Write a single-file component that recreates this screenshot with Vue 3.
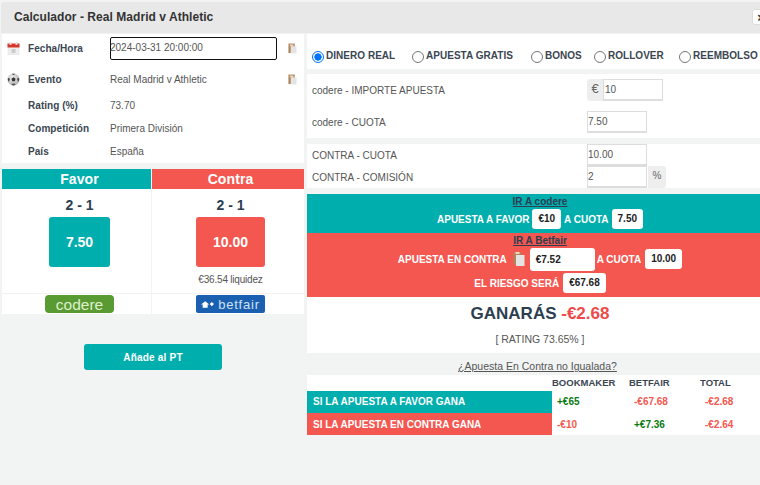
<script setup>
const radios = [
  { label: 'DINERO REAL', on: true },
  { label: 'APUESTA GRATIS' },
  { label: 'BONOS' },
  { label: 'ROLLOVER' },
  { label: 'REEMBOLSO' },
]
</script>

<template>
  <div class="page">
    <header class="head">
      <h1>Calculador - Real Madrid v Athletic</h1>
      <button class="close">×</button>
    </header>
    <div class="cols">
      <section class="left">
        <div class="card info">
          <div class="row r1">
            <svg class="ico" viewBox="0 0 13 13"><rect x="1" y="2" width="11" height="11" fill="#eee" stroke="#ddd" stroke-width=".5"/><rect x="0.5" y="1.5" width="12" height="4" fill="#d9362b"/><rect x="2.5" y="0" width="2" height="3" fill="#f4dcd9"/><rect x="8.5" y="0" width="2" height="3" fill="#f4dcd9"/><rect x="4.5" y="7" width="4" height="4" fill="#ccc"/></svg>
            <b>Fecha/Hora</b>
            <span class="dt">2024-03-31 20:00:00</span>
            <svg class="clip" viewBox="0 0 10 12"><rect x="0.5" y="0.5" width="7" height="10.5" fill="#b0835a"/><rect x="2" y="1.5" width="4" height="2" fill="#e8d8c0"/><rect x="3" y="3.5" width="6.5" height="8" fill="#e4e4e4"/></svg>
          </div>
          <div class="row r2">
            <svg class="ico ball" viewBox="0 0 14 14"><defs><radialGradient id="ball" cx=".4" cy=".35" r=".75"><stop offset="0" stop-color="#f0f0f0"/><stop offset="1" stop-color="#aaa"/></radialGradient></defs><circle cx="7" cy="7" r="6.5" fill="url(#ball)"/><path d="M7 4.6 9.2 6.2 8.4 8.8H5.6L4.8 6.2z" fill="#333"/><path d="M.8 6 2.6 5 3 7.6 1.4 9.4z" fill="#444"/><path d="M13.2 6 11.4 5 11 7.6 12.6 9.4z" fill="#444"/><path d="M5 .8 9 .8 7 2.4z" fill="#555"/><path d="M4.6 12.9 6 11.2H8L9.4 12.9 7 13.5z" fill="#555"/></svg>
            <b>Evento</b>
            <span>Real Madrid v Athletic</span>
            <svg class="clip" viewBox="0 0 10 12"><rect x="0.5" y="0.5" width="7" height="10.5" fill="#b0835a"/><rect x="2" y="1.5" width="4" height="2" fill="#e8d8c0"/><rect x="3" y="3.5" width="6.5" height="8" fill="#e4e4e4"/></svg>
          </div>
          <div class="row r3"><i class="ico"></i><b>Rating (%)</b><span>73.70</span></div>
          <div class="row r3"><i class="ico"></i><b>Competición</b><span>Primera División</span></div>
          <div class="row r3"><i class="ico"></i><b>País</b><span>España</span></div>
        </div>

        <div class="odds">
          <div class="col">
            <div class="top teal">Favor</div>
            <div class="body">
              <div class="score">2 - 1</div>
              <div class="price teal p1">7.50</div>
            </div>
            <div class="logo"><span class="codere">codere</span></div>
          </div>
          <div class="col">
            <div class="top red">Contra</div>
            <div class="body">
              <div class="score">2 - 1</div>
              <div class="price red p2">10.00</div>
              <div class="liq">€36.54 liquidez</div>
            </div>
            <div class="logo">
              <span class="betfair">
                <svg viewBox="0 0 18 10" width="15" height="9"><path d="M0 5 5 1l5 4H8v4H2V5z" fill="#fff"/><path d="M13 2l2.5 2.5L13 7l-2.5-2.5z" fill="#fff"/></svg>betfair
              </span>
            </div>
          </div>
        </div>
        <div class="addwrap"><button class="add">Añade al PT</button></div>
      </section>

      <section class="right">
        <div class="card radios">
          <label v-for="r in radios" :key="r.label" class="radio">
            <span class="dot" :class="{ on: r.on }"></span>{{ r.label }}
          </label>
        </div>
        <div class="card amounts">
          <div class="frow h32">
            <span class="lab">codere - IMPORTE APUESTA</span>
            <span class="addon eur">€</span><span class="field w60">10</span>
          </div>
          <div class="frow h32">
            <span class="lab">codere - CUOTA</span>
            <span class="field">7.50</span>
          </div>
        </div>
        <div class="card contra">
          <div class="frow h22">
            <span class="lab">CONTRA - CUOTA</span>
            <span class="field">10.00</span>
          </div>
          <div class="frow h22">
            <span class="lab">CONTRA - COMISIÓN</span>
            <span class="field">2</span><span class="addon pct">%</span>
          </div>
        </div>

        <div class="band teal b1">
          <a class="go">IR A codere</a>
          <div class="line g3">APUESTA A FAVOR<span class="chip">€10</span>A CUOTA<span class="chip">7.50</span></div>
        </div>
        <div class="band red b2">
          <a class="go">IR A Betfair</a>
          <div class="line">
            <span>APUESTA EN CONTRA</span>
            <svg class="clip2" viewBox="0 0 12 14"><rect x="0.5" y="0.5" width="8" height="12" fill="#b0835a"/><rect x="2.5" y="0" width="4" height="2" fill="#e8d8c0"/><rect x="3" y="3" width="8.5" height="11" fill="#e4e4e4"/></svg>
            <span class="chip inputchip">€7.52</span>
            <span class="cuota">A CUOTA</span>
            <span class="chip">10.00</span>
          </div>
          <div class="line l3">EL RIESGO SERÁ<span class="chip">€67.68</span></div>
        </div>
        <div class="result">
          <div class="win">GANARÁS <span>-€2.68</span></div>
          <div class="rate">[ RATING 73.65% ]</div>
        </div>

        <a class="unmatched">¿Apuesta En Contra no Igualada?</a>
        <div class="table">
          <div class="thead"><span class="c0"></span><span class="c1">BOOKMAKER</span><span class="c2">BETFAIR</span><span class="c3">TOTAL</span></div>
          <div class="trow">
            <span class="c0 teal">SI LA APUESTA A FAVOR GANA</span>
            <span class="c1 pos">+€65</span><span class="c2 neg">-€67.68</span><span class="c3 neg">-€2.68</span>
          </div>
          <div class="trow second">
            <span class="c0 red">SI LA APUESTA EN CONTRA GANA</span>
            <span class="c1 neg">-€10</span><span class="c2 pos">+€7.36</span><span class="c3 neg">-€2.64</span>
          </div>
        </div>
      </section>
    </div>
  </div>
</template>

<style>
html, body { margin: 0; background: #f2f4f4; overflow: hidden; }
</style>

<style scoped>
.page {
  width: 760px; height: 485px; overflow: hidden; background: #f2f4f4; padding-top: 2px;
  box-sizing: border-box; font-family: "Liberation Sans", Arial, sans-serif; color: #2c3e50;
}
.head {
  height: 31px; margin-left: 1px; background: #e8e8e8; display: flex; align-items: center;
  justify-content: space-between; padding-left: 13px; border-radius: 3px 0 0 0; padding-bottom: 2px; box-sizing: border-box;
}
h1 { margin: 0; font-size: 12px; font-weight: 700; color: #333; letter-spacing: .05px; }
.close {
  width: 18px; height: 16px; margin-right: -10px; padding: 0; border: 1px solid #ddd; background: #fff; flex: none;
  font: 700 13px "Liberation Sans", sans-serif; color: #333; border-radius: 3px;
}
.cols { display: flex; padding-top: 1px; }
.left { width: 302px; margin-left: 2px; flex: none; }
.right { width: 466px; margin-left: 3px; flex: none; }
.card { background: #fff; }
.teal { background: #00aeae; color: #fff; }
.red { background: #f4574f; color: #fff; }

.info { height: 129px; font-size: 10px; color: #555; }
.row { display: flex; align-items: center; padding-left: 5px; box-sizing: border-box; }
.row b { width: 82px; margin-left: 8px; color: #3a4652; letter-spacing: .05px; }
.row > span { width: 167px; }
.ico { display: block; width: 13px; height: 13px; flex: none; }
.ball { margin-top: 1px; }
.r1 { height: 29px; }
.r2 { height: 31px; padding-top: 1px; }
.r3 { height: 23px; }
.dt {
  box-sizing: border-box; height: 23px; line-height: 20px; border: 1.5px solid #111; border-radius: 2px;
  font-size: 10px; color: #555; text-indent: -1px;
}
.clip { width: 9px; height: 11px; margin-left: 11px; flex: none; }

.odds { display: flex; margin-top: 6px; gap: 1px; }
.col { flex: 1 1 0; background: #fff; display: flex; flex-direction: column; }
.col:first-child { flex: 0 0 149px; }
.top { height: 20px; line-height: 20px; text-align: center; font-size: 14px; font-weight: 700; margin-bottom: 1px; padding-left: 6px; letter-spacing: .1px; }
.body { height: 103px; display: flex; flex-direction: column; align-items: center; padding-left: 6px; }
.logo { height: 20px; border-top: 1px solid #f2f2f2; display: flex; justify-content: center; padding-left: 6px; }
.col + .col .top, .col + .col .body, .col + .col .logo { padding-left: 5px; }
.score { font-size: 14px; font-weight: 700; margin-top: 6px; height: 19px; line-height: 19px; }
.price {
  margin-top: 2px; height: 50px; line-height: 50px; text-align: center; font-size: 14px; font-weight: 700;
  border-radius: 3px; padding: 0;
}
.p1 { width: 61px; }
.p2 { width: 69px; }
.liq { font-size: 10px; letter-spacing: -.2px; color: #555; margin-top: 7px; }
.codere {
  width: 69px; height: 18px; margin-top: 1px; background: #5a9a32; color: #dff0cf; border-radius: 4px;
  font-size: 15.5px; line-height: 20px; text-align: center; overflow: hidden;
}
.betfair {
  width: 69px; height: 18px; margin-top: 1px; background: #1a5fb0; color: #cfe0f3; border-radius: 2px;
  font-size: 13px; display: flex; align-items: center; justify-content: center; gap: 2px;
  letter-spacing: .8px;
}
.addwrap { display: flex; justify-content: center; margin-top: 30px; }
.add {
  width: 138px; height: 26px; border: 0; border-radius: 3px; background: #00aeae; color: #fff;
  font: 700 10px "Liberation Sans", sans-serif; letter-spacing: .2px;
}

.radios {
  height: 35px; box-sizing: border-box; padding: 7px 0 0 5px; display: flex; align-items: center;
  font-size: 10px; font-weight: 700; color: #3a4652; letter-spacing: .03px;
}
.radio { display: flex; align-items: center; white-space: nowrap; }
.radio:nth-child(1) { width: 100px; }
.radio:nth-child(2) { width: 119px; }
.radio:nth-child(3) { width: 63px; }
.radio:nth-child(4) { width: 85px; }
.dot {
  width: 10px; height: 10px; border: 1px solid #767676; border-radius: 50%; margin-right: 2px; position: relative; top: 2px;
  background: #fff; flex: none;
}
.dot.on { border-color: #0075ff; background: radial-gradient(circle, #0075ff 0 3.4px, #fff 3.9px); }

.amounts { margin-top: 5px; height: 64px; padding-left: 5px; box-sizing: border-box; }
.contra { margin-top: 6px; height: 44px; padding-left: 5px; }
.frow { display: flex; align-items: center; font-size: 10px; color: #555; }
.h32 { height: 32px; }
.h22 { height: 22px; }
.lab { width: 275px; flex: none; }
.field {
  box-sizing: border-box; width: 60px; height: 22px; line-height: 20px; border: 1px solid #ddd;
  border-width: 1px 1px 2px 1px; font-size: 10px; color: #555; background: #fff;
}
.w60 { padding-left: 1px; }
.addon {
  height: 22px; line-height: 20px; background: #eee; color: #666; text-align: center; box-sizing: border-box;
  border-radius: 3px 0 0 3px;
}
.eur { width: 16px; font-size: 13px; }
.pct { width: 18px; font-size: 10px; margin-left: 1px; border-radius: 0 3px 3px 0; }

.band { text-align: center; font-size: 10px; font-weight: 700; }
.b1 { margin-top: 6px; height: 39px; }
.b2 { height: 64px; }
.go { display: block; color: #2c3e50; text-decoration: underline; height: 13px; line-height: 13px; padding-top: 1px; font-size: 10px; }
.line { display: flex; justify-content: center; align-items: center; white-space: pre; }
.b1 .line { height: 22px; margin-top: 0; gap: 3px; }
.b2 .line { height: 24px; }
.b2 .line.l3 { height: 22px; margin-top: 1px; gap: 4px; }
.chip {
  background: #fff; color: #222; border-radius: 3px; height: 20px; line-height: 20px; padding: 0 6px; display: inline-block;
}
.inputchip { width: 59px; height: 23px; line-height: 24px; text-align: left; padding: 0 0 0 6px; }
.clip2 { width: 12px; height: 14px; margin: 0 5px 0 6px; }
.cuota { margin: 0 4px 0 2px; }
.result { height: 56px; background: #fff; text-align: center; }
.win { font-size: 17px; font-weight: 700; padding-top: 6px; line-height: 21px; color: #2c3e50; }
.win span { color: #f0494a; }
.rate { font-size: 10.5px; color: #555; margin-top: 9px; }
.unmatched { display: block; text-align: center; font-size: 10.5px; color: #555; text-decoration: underline; margin-top: 7px; line-height: 13px; padding-right: 5px; }

.table { margin-top: 2px; font-size: 10px; font-weight: 700; }
.thead { display: flex; height: 16px; line-height: 16px; background: #fff; font-size: 9.5px; color: #3a4652; }
.trow { display: flex; height: 22px; line-height: 22px; background: #fff; }
.second { line-height: 23px; }
.c0 { width: 245px; flex: none; padding-left: 6px; box-sizing: border-box; white-space: nowrap; }
.c1, .c2, .c3 { flex: none; box-sizing: border-box; }
.c1 { width: 77px; }
.c2 { width: 71px; }
.c3 { width: 73px; }
.trow .c1, .trow .c2, .trow .c3 { padding-left: 5px; }
.pos { color: #0a7a10; }
.neg { color: #f4574f; }
</style>
